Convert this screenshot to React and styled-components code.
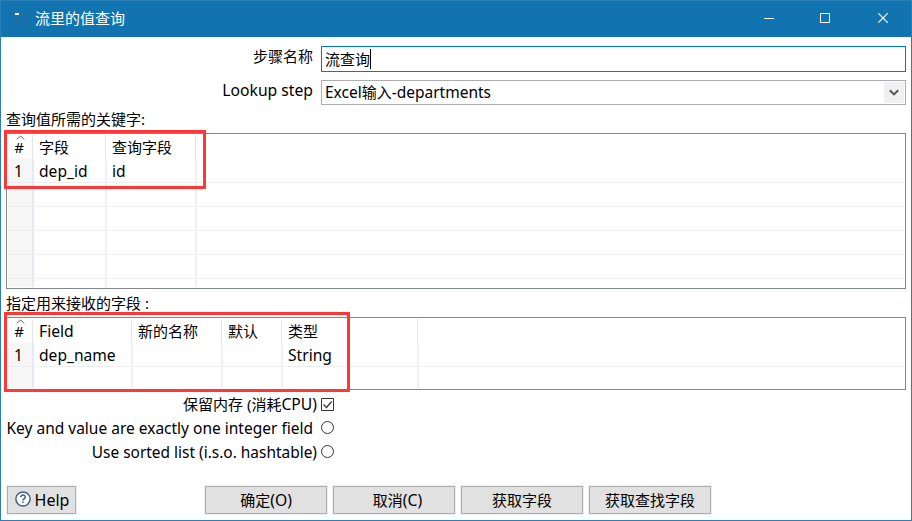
import React from "react";
import styled, { createGlobalStyle } from "styled-components";

const GlobalStyle = createGlobalStyle`
  * { box-sizing: border-box; }
  body { margin: 0; background: #fff; }
`;

const Window = styled.div`
  position: relative;
  display: flex;
  flex-direction: column;
  width: 912px;
  height: 521px;
  border: 1px solid #2a7fb9;
  background: #fff;
  color: #000;
  font: 15px/20px "Noto Sans", "Noto Sans CJK SC", sans-serif;
  white-space: pre;
  overflow: hidden;
`;

const Latin = styled.span`
  font-size: ${(p) => p.$size || 15.5}px;
`;

const TitleBar = styled.header`
  display: flex;
  flex: none;
  align-items: center;
  height: 36px;
  padding: 0 0 2px 11px;
  background: #1273b1;
  color: #fff;
`;

const StepIcon = styled.svg`
  width: 18px;
  height: 16px;
  margin-right: 5px;
`;

const Title = styled.h1`
  flex: 1;
  margin: 0;
  font: inherit;
`;

const Caption = styled.button`
  width: ${(p) => p.$width}px;
  height: 34px;
  padding: 0;
  border: 0;
  background: none;
  color: #fff;
  svg { display: block; margin: 0 auto; }
`;

const Body = styled.main`
  display: flex;
  flex-direction: column;
  padding: 9px 5px 0;
`;

const FormRow = styled.div`
  display: flex;
  height: ${(p) => p.$height}px;
  margin-bottom: ${(p) => p.$gap}px;
`;

const FieldLabel = styled.label`
  flex: none;
  width: 307px;
  margin-right: 8px;
  line-height: 21px;
  text-align: right;
`;

const Field = styled.div`
  display: flex;
  flex: 1;
  align-items: center;
  padding: 0 0 1px 3px;
  border: 1px solid ${(p) => (p.$focused ? "#0078d7" : "#abadb3")};
`;

const Caret = styled.span`
  width: 1px;
  height: 20px;
  background: #000;
`;

const DropButton = styled.span`
  display: flex;
  align-items: center;
  justify-content: center;
  width: 20px;
  height: 21px;
  margin: 1px 1px 0 auto;
  padding-right: 1px;
  background: #f0f0f0;
`;

const SectionLabel = styled.h2`
  height: 28px;
  margin: 0;
  padding-top: 4px;
  font: inherit;
`;

const Grid = styled.div`
  height: ${(p) => p.$height}px;
  padding: 1px;
  border: 1px solid #828790;
`;

const GridBody = styled.div`
  height: 100%;
  overflow: hidden;
`;

const GridRow = styled.div`
  display: grid;
  grid-template-columns: ${(p) => p.$columns};
  grid-template-rows: 24px;
`;

const HeadCell = styled.div`
  padding-left: 6px;
  border-right: 1px solid #e5e5e5;
  line-height: 24px;
  &:last-child { border-right: 0; }
`;

const HashHead = styled(HeadCell)`
  display: flex;
  flex-direction: column;
  align-items: center;
  padding: 0 2px 0 0;
  line-height: 20px;
  svg { flex: none; margin-left: 2px; }
  span { margin-top: -3px; }
`;

const Cell = styled.div`
  padding-left: 5px;
  border-right: 2px solid #eef0f6;
  border-bottom: 1px solid #eee;
  line-height: 24px;
  &:last-child { border-right: 0; }
`;

const IndexCell = styled(Cell)`
  padding-left: 6px;
  border-right-color: #e3e9f8;
  background: #f6f6f6;
`;

const Options = styled.div`
  display: flex;
  flex-direction: column;
  width: 328px;
  height: 72px;
  margin-top: 3px;
`;

const Option = styled.label`
  display: flex;
  justify-content: flex-end;
  height: 24px;
  line-height: 22px;
  svg { flex: none; margin: ${(p) => p.$top}px 0 0 ${(p) => p.$gap}px; }
`;

const Footer = styled.footer`
  display: flex;
  gap: 6px;
  margin-top: 21px;
  padding-left: 1px;
`;

const Button = styled.button`
  display: flex;
  align-items: center;
  justify-content: center;
  width: ${(p) => p.$width || 122}px;
  height: 28px;
  margin: 0 ${(p) => p.$after || 0}px 0 0;
  padding: 0 0 1px ${(p) => p.$indent || 0}px;
  border: 1px solid #adadad;
  box-shadow: 0 0 0 1px #f0f0f0;
  background: #e1e1e1;
  color: #000;
  font: inherit;
  svg { margin: 0 4px 1px 0; }
`;

const Highlight = styled.div`
  position: absolute;
  left: 3px;
  top: ${(p) => p.$top}px;
  width: ${(p) => p.$width}px;
  height: ${(p) => p.$height}px;
  border: 3px solid #fd3837;
  pointer-events: none;
`;

const SortMark = () => (
  <svg width="9" height="5" viewBox="0 0 9 5">
    <path d="M.8 4.5 4.5.8l3.7 3.7" fill="none" stroke="#666" />
  </svg>
);

const Radio = () => (
  <svg width="13" height="13" viewBox="0 0 13 13">
    <circle cx="6.5" cy="6.5" r="6" fill="#fff" stroke="#333" />
  </svg>
);

function DataGrid({ height, columns, head, rows }) {
  return (
    <Grid $height={height}>
      <GridBody>
        <GridRow $columns={columns.head}>
          <HashHead><SortMark /><span>#</span></HashHead>
          {head.map((text, i) => <HeadCell key={i}>{text}</HeadCell>)}
        </GridRow>
        {rows.map((row, r) => (
          <GridRow key={r} $columns={columns.body}>
            <IndexCell><Latin>{row[0]}</Latin></IndexCell>
            {head.map((_, i) => <Cell key={i}><Latin $size={15.6}>{row[i + 1]}</Latin></Cell>)}
          </GridRow>
        ))}
      </GridBody>
    </Grid>
  );
}

export default function App() {
  return (
    <>
      <GlobalStyle />
      <Window>
        <TitleBar>
          <StepIcon viewBox="0 0 18 16">
            <path d="M0 4h17M5 4v9h2" fill="none" stroke="#3d6586" strokeWidth="2" opacity=".65" />
            <path d="M3 3h4v2H3z" fill="#fff" />
            <circle cx="13.5" cy="13" r="2" fill="none" stroke="#3d6586" opacity=".65" />
          </StepIcon>
          <Title>流里的值查询</Title>
          <Caption $width={52} aria-label="Minimize">
            <svg width="10" height="10"><path d="M0 5.5h10" stroke="#fff" /></svg>
          </Caption>
          <Caption $width={60} aria-label="Maximize">
            <svg width="10" height="10"><path d="M.5.5h9v9h-9z" fill="none" stroke="#fff" /></svg>
          </Caption>
          <Caption $width={56} aria-label="Close">
            <svg width="10" height="10"><path d="m0 0 10 10m0-10-10 10" stroke="#fff" strokeWidth="1.2" /></svg>
          </Caption>
        </TitleBar>
        <Body>
          <FormRow $height={26} $gap={8}>
            <FieldLabel>步骤名称</FieldLabel>
            <Field $focused>流查询<Caret /></Field>
          </FormRow>
          <FormRow $height={25} $gap={0}>
            <FieldLabel><Latin $size={15.7}>Lookup step</Latin></FieldLabel>
            <Field>
              <Latin>Excel</Latin>输入<Latin>-departments</Latin>
              <DropButton>
                <svg width="10" height="8"><path d="m.8 1.2 4.2 4.2 4.2-4.2" fill="none" stroke="#555" strokeWidth="2" /></svg>
              </DropButton>
            </Field>
          </FormRow>
          <SectionLabel>查询值所需的关键字:</SectionLabel>
          <DataGrid
            height={156}
            columns={{ head: "25px 73px 90px 1fr", body: "26px 73px 90px 1fr" }}
            head={["字段", "查询字段", ""]}
            rows={[["1", "dep_id", "id"], [], [], [], [], []]}
          />
          <SectionLabel>指定用来接收的字段 :</SectionLabel>
          <DataGrid
            height={73}
            columns={{ head: "25px 99px 90px 60px 136px 1fr", body: "26px 99px 90px 60px 136px 1fr" }}
            head={[<Latin $size={15.7}>Field</Latin>, "新的名称", "默认", "类型", ""]}
            rows={[["1", "dep_name", "", "", "String"], []]}
          />
          <Options>
            <Option $top={5} $gap={4}>
              保留内存 (消耗<Latin $size={15.7}>CPU)</Latin>
              <svg width="13" height="13"><path d="M.5.5h12v12H.5z" fill="#fff" stroke="#333" /><path d="m2.5 6.5 3 3 5.2-6" fill="none" stroke="#333" strokeWidth="1.2" /></svg>
            </Option>
            <Option $top={4} $gap={8}><Latin>Key and value are exactly one integer field</Latin><Radio /></Option>
            <Option $top={4} $gap={4}><Latin $size={15.45}>Use sorted list (i.s.o. hashtable)</Latin><Radio /></Option>
          </Options>
          <Footer>
            <Button $width={69} $after={123} $indent={1}>
              <svg width="16" height="16" viewBox="0 0 16 16">
                <circle cx="8" cy="8" r="7.1" fill="#fff" stroke="#3d6586" strokeWidth="1.5" />
                <path d="M5.8 6.3c0-3 4.5-2.8 4.4-.1 0 1.7-2.2 1.5-2.2 3.2M8 10.6v1.5" fill="none" stroke="#3d6586" strokeWidth="1.5" />
              </svg>
              <Latin $size={16}>Help</Latin>
            </Button>
            <Button>确定<Latin $size={15.7}>(O)</Latin></Button>
            <Button $indent={7}>取消<Latin $size={15.7}>(C)</Latin></Button>
            <Button>获取字段</Button>
            <Button>获取查找字段</Button>
          </Footer>
        </Body>
        <Highlight $top={129} $width={202} $height={59} />
        <Highlight $top={311} $width={346} $height={80} />
      </Window>
    </>
  );
}
